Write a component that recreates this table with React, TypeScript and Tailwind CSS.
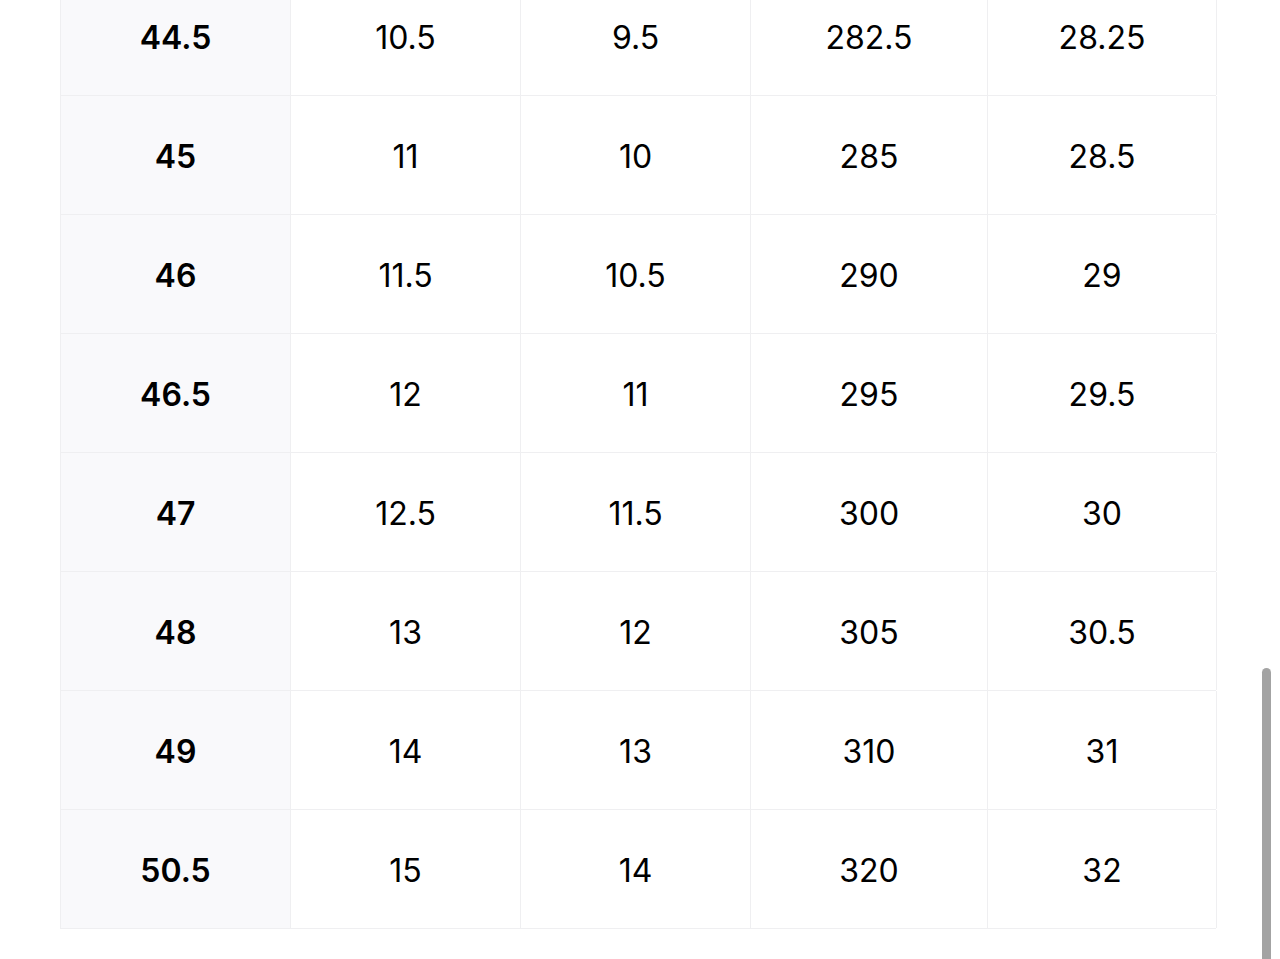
import React from 'react';

const rows: string[][] = [
  ['44.5', '10.5', '9.5', '282.5', '28.25'],
  ['45', '11', '10', '285', '28.5'],
  ['46', '11.5', '10.5', '290', '29'],
  ['46.5', '12', '11', '295', '29.5'],
  ['47', '12.5', '11.5', '300', '30'],
  ['48', '13', '12', '305', '30.5'],
  ['49', '14', '13', '310', '31'],
  ['50.5', '15', '14', '320', '32'],
];

const colWidths = ['w-[230px]', 'w-[230px]', 'w-[230px]', 'w-[237px]', 'w-[229px]'];

export default function App() {
  return (
    <div className="relative h-[959px] w-full overflow-hidden bg-white font-['Inter','Liberation_Sans',sans-serif] text-black">
      <div className="-mt-[24px] pl-[60px]">
        <div className="w-[1156px] border-l border-b border-[#efeff1]">
          {rows.map((row, i) => (
            <div key={i} className="flex border-t border-[#efeff1]">
              {row.map((cell, j) => (
                <div
                  key={j}
                  className={`flex h-[118px] shrink-0 items-center justify-center border-r border-[#efeff1] pt-[3px] text-[32px] ${colWidths[j]} ${
                    j === 0 ? 'bg-[#f9f9fb] font-semibold' : 'bg-white font-normal'
                  }`}
                >
                  {cell}
                </div>
              ))}
            </div>
          ))}
        </div>
      </div>
      {/* overlay scrollbar */}
      <div className="absolute left-[1262px] top-[668px] h-[300px] w-[9px] rounded-full bg-[#a3a3a3]" />
    </div>
  );
}
